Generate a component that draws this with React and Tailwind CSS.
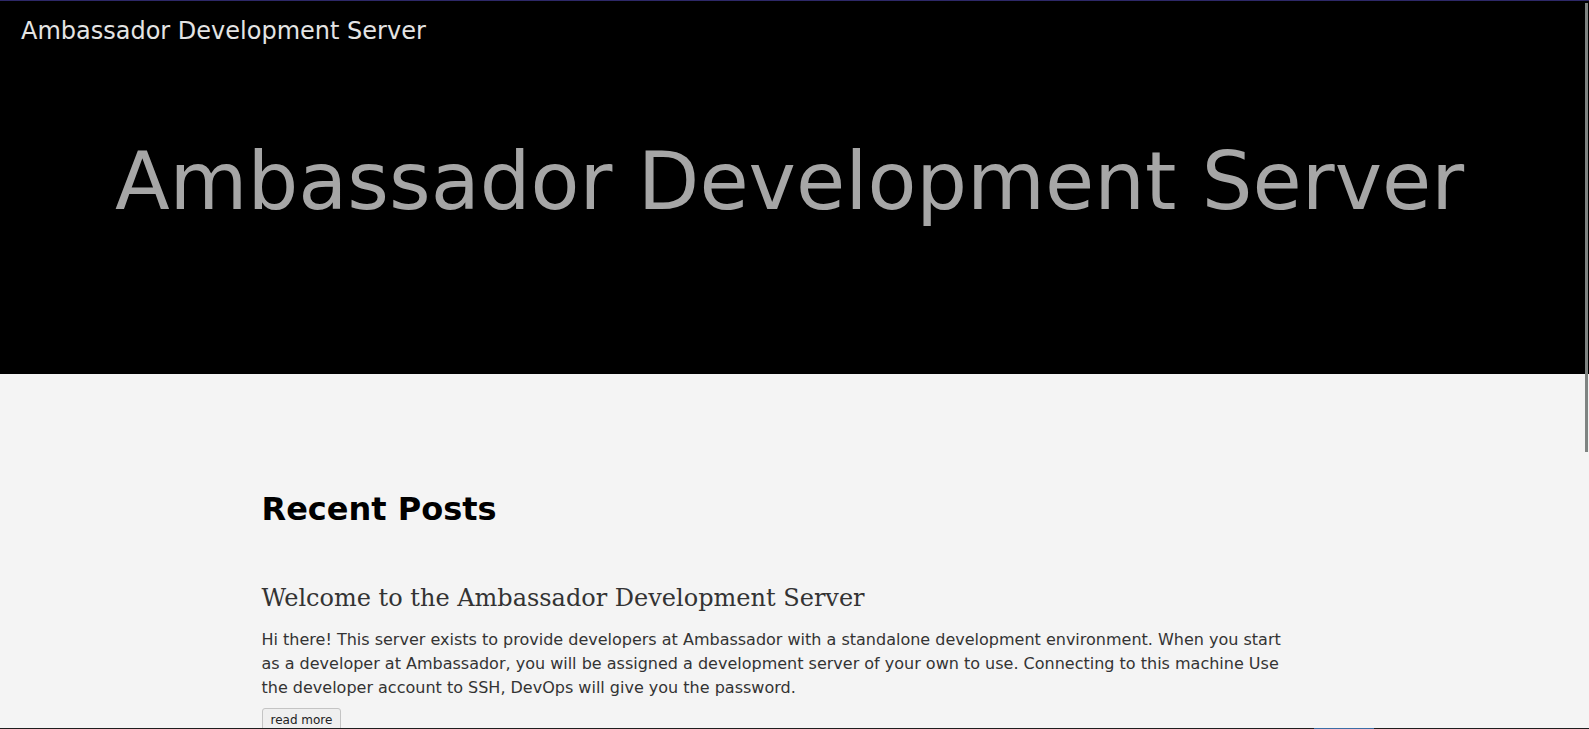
import React from 'react';

const posts = [
  {
    title: 'Welcome to the Ambassador Development Server',
    body:
      'Hi there! This server exists to provide developers at Ambassador with a standalone development environment. When you start as a developer at Ambassador, you will be assigned a development server of your own to use. Connecting to this machine Use the developer account to SSH, DevOps will give you the password.',
  },
];

function App() {
  return (
    <div
      className="relative h-[729px] overflow-hidden bg-[#f4f4f4]"
      style={{ fontFamily: '"DejaVu Sans", sans-serif' }}
    >
      <div className="h-px bg-[#2d2868]" />

      {/* Hero */}
      <header className="h-[373px] bg-black">
        <nav className="px-[21px] pt-4">
          <a href="#" className="text-[24px] leading-[28px] text-[#e4e4e4]">
            Ambassador Development Server
          </a>
        </nav>
        <h1 className="mt-[89px] pr-[10px] text-center text-[80px] leading-[93px] text-[#a6a6a6]">
          Ambassador Development Server
        </h1>
      </header>

      {/* Posts */}
      <div className="pr-[8px]">
        <main className="mx-auto w-[1058px] pt-[117px]">
          <h2 className="text-[32px] font-bold leading-[37px] text-black">Recent Posts</h2>
          {posts.map((post) => (
            <article key={post.title} className="mt-[56px]">
              <h3
                className="text-[24px] leading-[28px] text-[#333]"
                style={{ fontFamily: '"DejaVu Serif", serif' }}
              >
                {post.title}
              </h3>
              <p className="mt-4 max-w-[1030px] text-[16px] leading-[24px] text-[#333]">
                {post.body}
              </p>
              <button className="mt-2 rounded-[3px] border border-[#c4c4c4] bg-[#efefef] px-2 py-1 text-[12px] leading-[14px] text-[#222]">
                read more
              </button>
            </article>
          ))}
        </main>
      </div>

      {/* overlay scrollbar + bottom edge */}
      <div className="absolute right-px top-[3px] h-[449px] w-[3px] bg-[#7f8482]" />
      <div className="absolute bottom-0 left-0 right-0 h-px bg-[#1e1e1e]">
        <div className="ml-[1314px] h-px w-[60px] bg-[#3b6ea5]" />
      </div>
    </div>
  );
}

export default App;
